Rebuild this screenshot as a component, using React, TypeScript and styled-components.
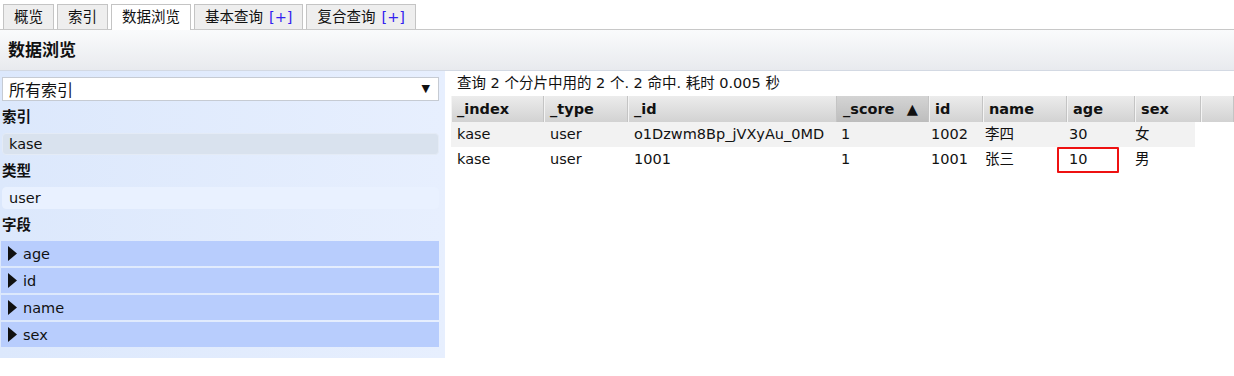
import React from 'react';
import styled, { createGlobalStyle, css } from 'styled-components';

const GlobalStyle = createGlobalStyle`
  html, body {
    margin: 0;
    padding: 0;
    background: #fff;
  }
  body {
    font-family: "DejaVu Sans", "Noto Sans CJK SC", sans-serif;
    font-size: 14.5px;
    color: #111;
  }
`;

const Page = styled.div`
  width: 1234px;
  height: 376px;
  overflow: hidden;
`;

const TabBar = styled.div`
  display: flex;
  align-items: flex-end;
  gap: 3px;
  height: 29px;
  padding-left: 3px;
  border-bottom: 1px solid #c8c8c8;
`;

interface ITabProps {
  active?: boolean;
}

const Tab = styled.div<ITabProps>`
  height: 24px;
  line-height: 24px;
  padding: 0 10px;
  border: 1px solid #c4c4c4;
  border-bottom: none;
  background: #eeeeee;
  font-size: 14.5px;
  white-space: nowrap;
  ${props => props.active && css`
    background: #fff;
    height: 25px;
    margin-bottom: -1px;
  `};
`;

const Plus = styled.span`
  color: #3322ee;
  margin-left: 6px;
`;

const Header = styled.div`
  height: 40px;
  line-height: 40px;
  padding-left: 8px;
  font-size: 17px;
  font-weight: bold;
  background: linear-gradient(#fafbfc, #e8eaee);
  border-bottom: 1px solid #d3d9e3;
`;

const Main = styled.div`
  display: flex;
  align-items: flex-start;
`;

const Sidebar = styled.div`
  width: 445px;
  box-sizing: border-box;
  padding: 6px 6px 11px 1px;
  background: linear-gradient(90deg, #dce8fc, #e7effe);
`;

const Select = styled.div`
  position: relative;
  margin-left: 1px;
  height: 22px;
  border: 1px solid #c6cbd3;
  background: #fff;
  font-size: 16px;
  line-height: 26px;
  padding-left: 6px;
  overflow: hidden;
`;

const SelectArrow = styled.span`
  position: absolute;
  right: 8px;
  top: 0;
  font-size: 11px;
  line-height: 22px;
  color: #111;
`;

const Label = styled.div`
  height: 32px;
  line-height: 32px;
  padding-left: 1px;
  font-weight: bold;
`;

interface IPillProps {
  light?: boolean;
}

const Pill = styled.div<IPillProps>`
  margin-left: 1px;
  height: 20px;
  line-height: 20px;
  padding-left: 6px;
  border: 1px solid #e4ebf6;
  border-radius: 4px;
  background: #d9e2ee;
  ${props => props.light && css`
    background: #e9f1ff;
    border-color: #e9f1ff;
  `};
`;

const FieldList = styled.div`
  display: flex;
  flex-direction: column;
  gap: 2px;
`;

const Field = styled.div`
  display: flex;
  align-items: center;
  gap: 6px;
  height: 25px;
  padding-left: 7px;
  background: #b8cdfd;
`;

const Arrow = styled.svg`
  width: 9px;
  height: 15px;
`;

const Content = styled.div`
  flex: 1;
  padding-left: 6px;
`;

const Info = styled.div`
  height: 25px;
  line-height: 25px;
  padding-left: 6px;
`;

const headCols = '93px 84px 209px 92px 54px 84px 68px 66px 1fr';
const bodyCols = '93px 84px 207px 92px 52px 84px 66px 66px';

const HeadRow = styled.div`
  display: grid;
  grid-template-columns: ${headCols};
  height: 26px;
`;

interface IHeadCellProps {
  sorted?: boolean;
}

const HeadCell = styled.div<IHeadCellProps>`
  display: flex;
  justify-content: space-between;
  padding: 0 10px 0 6px;
  line-height: 26px;
  font-weight: bold;
  background: linear-gradient(#ececec, #d2d2d2);
  border-right: 1px solid #c4c4c4;
  box-shadow: inset 1px 0 0 #f4f4f4;
  white-space: nowrap;
  ${props => props.sorted && css`
    background: linear-gradient(#d4d4d4, #bdbdbd);
    box-shadow: none;
  `};
`;

interface IRowProps {
  odd?: boolean;
}

const Row = styled.div<IRowProps>`
  display: grid;
  grid-template-columns: ${bodyCols};
  width: 744px;
  height: 25px;
  line-height: 25px;
  background: ${props => (props.odd ? '#f2f2f2' : '#fff')};
`;

interface ICellProps {
  pad?: number;
}

const Cell = styled.div<ICellProps>`
  position: relative;
  padding-left: ${props => props.pad ?? 6}px;
  white-space: nowrap;
`;

const Highlight = styled.div`
  position: absolute;
  left: -6px;
  top: 0;
  width: 58px;
  height: 22px;
  border: 2px solid #ee1111;
  border-radius: 1px;
`;

const tabs = [
  { name: '概览' },
  { name: '索引' },
  { name: '数据浏览', active: true },
  { name: '基本查询', plus: true },
  { name: '复合查询', plus: true },
];

const fields = ['age', 'id', 'name', 'sex'];
const columns = ['_index', '_type', '_id', '_score', 'id', 'name', 'age', 'sex'];
const pads = [6, 6, 6, 6, 4, 6, 6, 6];

const rows = [
  ['kase', 'user', 'o1Dzwm8Bp_jVXyAu_0MD', '1', '1002', '李四', '30', '女'],
  ['kase', 'user', '1001', '1', '1001', '张三', '10', '男'],
];

export default function App() {
  return (
    <Page>
      <GlobalStyle />
      <TabBar>
        {tabs.map(t => (
          <Tab key={t.name} active={t.active}>
            {t.name}
            {t.plus && <Plus>[+]</Plus>}
          </Tab>
        ))}
      </TabBar>
      <Header>数据浏览</Header>
      <Main>
        <Sidebar>
          <Select>
            所有索引
            <SelectArrow>▼</SelectArrow>
          </Select>
          <Label>索引</Label>
          <Pill>kase</Pill>
          <Label>类型</Label>
          <Pill light>user</Pill>
          <Label>字段</Label>
          <FieldList>
            {fields.map(f => (
              <Field key={f}>
                <Arrow viewBox="0 0 9 15">
                  <path d="M0 0 L9 7.5 L0 15 Z" fill="#111" />
                </Arrow>
                {f}
              </Field>
            ))}
          </FieldList>
        </Sidebar>
        <Content>
          <Info>查询 2 个分片中用的 2 个. 2 命中. 耗时 0.005 秒</Info>
          <HeadRow>
            {columns.map(c => (
              <HeadCell key={c} sorted={c === '_score'}>
                {c}
                {c === '_score' && <span>▲</span>}
              </HeadCell>
            ))}
            <HeadCell />
          </HeadRow>
          {rows.map((r, i) => (
            <Row key={i} odd={i === 0}>
              {r.map((v, j) => (
                <Cell key={j} pad={pads[j]}>
                  {v}
                  {i === 1 && j === 6 && <Highlight />}
                </Cell>
              ))}
            </Row>
          ))}
        </Content>
      </Main>
    </Page>
  );
}
